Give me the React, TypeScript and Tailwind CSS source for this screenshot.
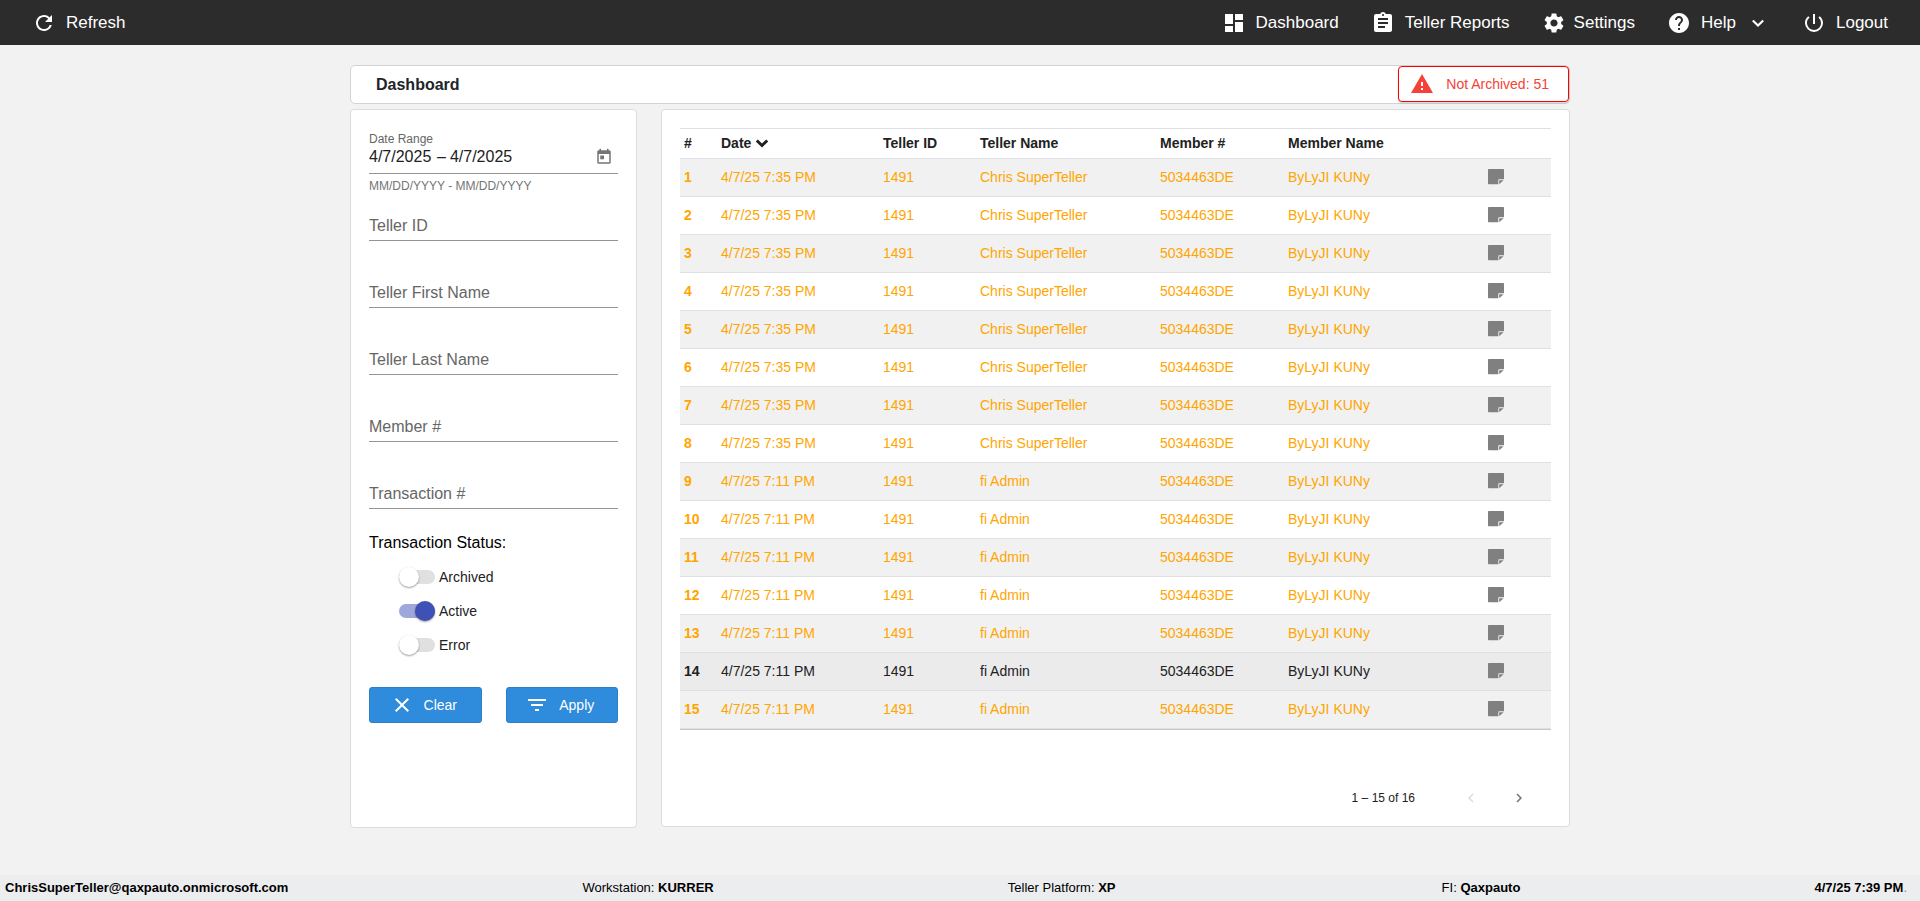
import React from 'react';
import {
  MdAssignment,
  MdChevronLeft,
  MdChevronRight,
  MdClose,
  MdDashboard,
  MdFilterList,
  MdHelp,
  MdPowerSettingsNew,
  MdRefresh,
  MdSettings,
  MdToday,
  MdWarning,
} from 'react-icons/md';

interface Transaction {
  date: string;
  tellerId: string;
  tellerName: string;
  memberNumber: string;
  memberName: string;
  active?: boolean;
}

const tellerRow: Transaction = {
  date: '4/7/25 7:35 PM',
  tellerId: '1491',
  tellerName: 'Chris SuperTeller',
  memberNumber: '5034463DE',
  memberName: 'ByLyJI KUNy',
};

const adminRow: Transaction = { ...tellerRow, date: '4/7/25 7:11 PM', tellerName: 'fi Admin' };

const transactions: Transaction[] = [
  ...Array.from({ length: 8 }, () => tellerRow),
  ...Array.from({ length: 5 }, () => adminRow),
  { ...adminRow, active: true },
  adminRow,
];

const textFields = [
  { id: 'teller-id', label: 'Teller ID' },
  { id: 'teller-first-name', label: 'Teller First Name' },
  { id: 'teller-last-name', label: 'Teller Last Name' },
  { id: 'member-number', label: 'Member #' },
  { id: 'transaction-number', label: 'Transaction #' },
];

const statuses = [
  { id: 'archived', label: 'Archived', on: false },
  { id: 'active', label: 'Active', on: true },
  { id: 'error', label: 'Error', on: false },
];

const NoteIcon: React.FC = () => (
  <svg viewBox="0 0 16 16" className="size-4" fill="currentColor" aria-hidden="true">
    <path d="M0.7 0H15.3Q16 0 16 0.7V10.2H11Q10.3 10.2 10.3 10.9V15.3H0.7Q0 15.3 0 14.6V0.7Q0 0 0.7 0Z" />
    <path d="M11.2 11.2H15.6L11.2 15.2Z" />
  </svg>
);

const ChevronIcon: React.FC<{ bold?: boolean }> = ({ bold }) => (
  <svg
    viewBox="0 0 14 14"
    className="size-3.5"
    fill="none"
    stroke="currentColor"
    strokeWidth={bold ? 3 : 2.2}
    aria-hidden="true"
  >
    <path d="M1.8 4.5L7 9.5L12.2 4.5" />
  </svg>
);

const TopBar: React.FC = () => (
  <header className="flex h-[45px] items-center justify-between bg-[#2c2c2c] px-8 text-[17px] leading-6 text-white">
    <button type="button" className="flex items-center gap-2.5">
      <MdRefresh className="size-6" />
      Refresh
    </button>
    <nav className="flex items-center gap-8">
      <a href="#dashboard" className="flex items-center gap-2.5">
        <MdDashboard className="size-6" />
        Dashboard
      </a>
      <a href="#reports" className="flex items-center gap-2.5">
        <MdAssignment className="size-6" />
        Teller Reports
      </a>
      <a href="#settings" className="flex items-center gap-2">
        <MdSettings className="size-6" />
        Settings
      </a>
      <button type="button" className="flex items-center gap-2.5 pr-[5px]">
        <MdHelp className="size-6" />
        Help
        <span className="pl-[5px]">
          <ChevronIcon />
        </span>
      </button>
      <a href="#logout" className="flex items-center gap-2.5">
        <MdPowerSettingsNew className="size-6" />
        Logout
      </a>
    </nav>
  </header>
);

const Filters: React.FC = () => (
  <form className="w-[287px] shrink-0 rounded border border-[#dcdcdc] bg-white px-[18px] pt-[23px] pb-[104px]">
    {/* Date range */}
    <fieldset>
      <legend className="text-xs leading-3 text-[#666]">Date Range</legend>
      <div className="flex items-center justify-between border-b border-[#949494] pb-1">
        <div className="flex h-6 items-center text-base text-[#212121]">
          <input aria-label="Start date" defaultValue="4/7/2025" className="w-16 outline-none" />
          <span className="mx-1">–</span>
          <input aria-label="End date" defaultValue="4/7/2025" className="w-16 outline-none" />
        </div>
        <button type="button" aria-label="Open calendar" className="mr-[5px] text-[#757575]">
          <MdToday className="size-[18px]" />
        </button>
      </div>
      <p className="mt-[3px] text-xs leading-[18px] text-[#757575]">MM/DD/YYYY - MM/DD/YYYY</p>
    </fieldset>

    <div className="mt-[19px] flex flex-col gap-10">
      {textFields.map((field) => (
        <div key={field.id} className="grid border-b border-[#949494] pb-0.5 text-base leading-6">
          <label htmlFor={field.id} className="[grid-area:1/1] text-[#666]">
            {field.label}
          </label>
          <input id={field.id} type="text" className="[grid-area:1/1] h-6 min-w-0 outline-none" />
        </div>
      ))}
    </div>

    {/* Status switches */}
    <p className="mt-[22px] text-base leading-6 text-black">Transaction Status:</p>
    <div className="mt-[5px] pl-[30px]">
      {statuses.map((status) => (
        <div key={status.id} className="flex h-[34px] items-center gap-1">
          <input
            id={status.id}
            type="checkbox"
            role="switch"
            defaultChecked={status.on}
            className="relative h-3.5 w-9 appearance-none rounded-full bg-[#e0e0e0] before:absolute before:-top-[3px] before:left-0 before:size-5 before:rounded-full before:bg-white before:shadow-[0_1px_2px_rgba(0,0,0,0.4)] checked:bg-[#9fa8da] checked:before:left-4 checked:before:bg-[#3f51b5]"
          />
          <label htmlFor={status.id} className="text-sm text-[#212121]">
            {status.label}
          </label>
        </div>
      ))}
    </div>

    <div className="mt-[25px] grid grid-cols-2 gap-6 text-sm text-white">
      <button
        type="button"
        className="flex h-9 items-center justify-center gap-2.5 rounded-[3px] border border-[#2a7fc9] bg-[#2f8bdb] pr-1"
      >
        <MdClose className="size-6" />
        Clear
      </button>
      <button
        type="submit"
        className="flex h-9 items-center justify-center gap-2.5 rounded-[3px] border border-[#2a7fc9] bg-[#2f8bdb] pr-1"
      >
        <MdFilterList className="size-6" />
        Apply
      </button>
    </div>
  </form>
);

const TransactionTable: React.FC = () => (
  <section className="min-w-0 flex-1 rounded border border-[#dcdcdc] bg-white px-[18px] pt-[18px] pb-2">
    <table className="w-full table-fixed border-separate border-spacing-0 text-left text-sm shadow-[0_1px_0_#c6c6ca] [&_td]:border-b [&_td]:border-[#dee0e6] [&_td]:px-1 [&_td]:pb-0.5 [&_th]:border-b [&_th]:border-[#dee0e6] [&_th]:px-1 [&_th]:pb-0.5">
      <colgroup>
        <col className="w-[37px]" />
        <col className="w-[162px]" />
        <col className="w-[97px]" />
        <col className="w-[180px]" />
        <col className="w-[128px]" />
        <col />
        <col className="w-[67px]" />
      </colgroup>
      <thead>
        <tr className="h-[31px] text-[#212121] [&>th]:border-t">
          <th scope="col">#</th>
          <th scope="col">
            <button type="button" className="flex items-center gap-1 font-bold">
              Date
              <ChevronIcon bold />
            </button>
          </th>
          <th scope="col">Teller ID</th>
          <th scope="col">Teller Name</th>
          <th scope="col">Member #</th>
          <th scope="col">Member Name</th>
          <th scope="col" aria-label="Notes" />
        </tr>
      </thead>
      <tbody>
        {transactions.map((row, i) => (
          <tr
            key={i}
            className={
              row.active
                ? 'h-[38px] bg-[#ebebeb] text-[#212121]'
                : 'h-[38px] text-[#ffa500] odd:bg-[#f1f1f1]'
            }
          >
            <th scope="row">{i + 1}</th>
            <td>{row.date}</td>
            <td>{row.tellerId}</td>
            <td>{row.tellerName}</td>
            <td>{row.memberNumber}</td>
            <td>{row.memberName}</td>
            <td>
              <button type="button" aria-label="View note" className="block text-[#808080]">
                <NoteIcon />
              </button>
            </td>
          </tr>
        ))}
      </tbody>
    </table>

    {/* Paginator */}
    <div className="mt-[49px] flex h-10 items-center justify-end pr-3 text-xs text-[#212121]">
      <span className="mr-9">1 – 15 of 16</span>
      <button
        type="button"
        disabled
        aria-label="Previous page"
        className="mr-2 flex size-10 items-center justify-center text-[#dcdcdc]"
      >
        <MdChevronLeft className="size-[18px]" />
      </button>
      <button
        type="button"
        aria-label="Next page"
        className="flex size-10 items-center justify-center text-[#757575]"
      >
        <MdChevronRight className="size-[18px]" />
      </button>
    </div>
  </section>
);

const StatusBar: React.FC = () => (
  <footer className="flex h-[26px] items-center justify-between bg-[#ecedef] pr-[13px] pl-[5px] text-[13px] text-black">
    <b>ChrisSuperTeller@qaxpauto.onmicrosoft.com</b>
    <span>
      Workstation: <b>KURRER</b>
    </span>
    <span className="pr-8">
      Teller Platform: <b>XP</b>
    </span>
    <span>
      FI: <b>Qaxpauto</b>
    </span>
    <span>
      <b>4/7/25 7:39 PM</b>
      <span className="text-[#888]">.</span>
    </span>
  </footer>
);

export default function App() {
  return (
    <div className="flex min-h-screen flex-col bg-[#f2f2f2] font-['Liberation_Sans',Arial,sans-serif]">
      <TopBar />
      <main className="mx-auto w-full max-w-[1220px] flex-1 pt-5">
        <div className="flex h-[39px] items-start justify-between rounded-[5px] border border-[#d3d3d3] bg-white">
          <h1 className="self-center pl-[25px] text-base font-bold text-[#212529]">Dashboard</h1>
          <button
            type="button"
            className="flex h-9 items-center gap-3 rounded border border-[#ff0000] bg-white pr-[19px] pl-[11px] text-sm text-[#f44336] shadow-[0_1px_2px_rgba(0,0,0,0.2)]"
          >
            <MdWarning className="size-6" />
            Not Archived: 51
          </button>
        </div>
        <div className="mt-[5px] flex items-start gap-6">
          <Filters />
          <TransactionTable />
        </div>
      </main>
      <StatusBar />
    </div>
  );
}
